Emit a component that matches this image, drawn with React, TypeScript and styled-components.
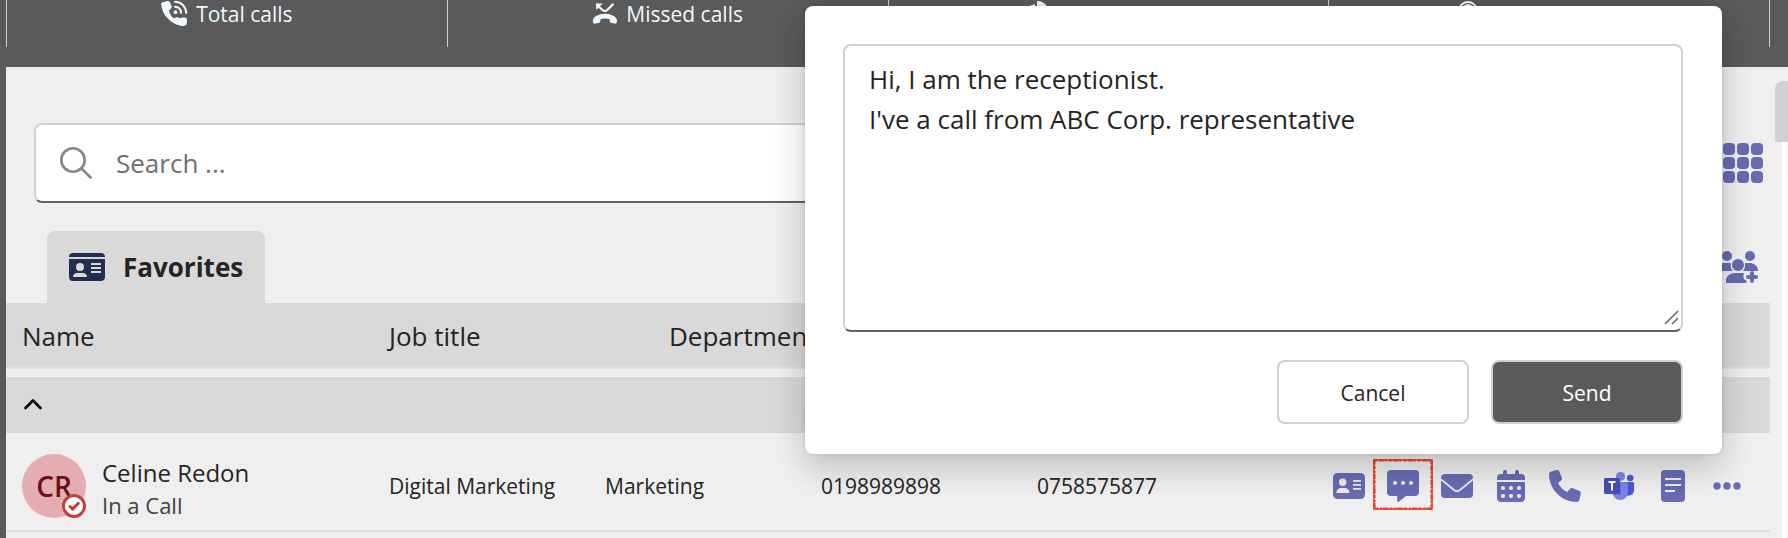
import React from "react";
import styled, { createGlobalStyle } from "styled-components";

const accent = "#676cb3";

const GlobalStyle = createGlobalStyle`
  *, *::before, *::after { box-sizing: border-box; }
  body {
    margin: 0;
    background: #efefef;
    color: #242424;
    font-family: "Open Sans", "Noto Sans", sans-serif;
    font-size: 21px;
  }
  button, input, textarea { font: inherit; color: inherit; margin: 0; }
  button { padding: 0; border: 0; background: none; cursor: pointer; }
  svg { display: block; flex: none; }
`;

const Page = styled.div`
  min-height: 100vh;
  display: flex;
  flex-direction: column;
  border-left: 6px solid #5a5a5a;
  overflow: hidden;
`;

const StatsBar = styled.header`
  display: flex;
  padding: 0 18px 20px 0;
  background: #5a5a5a;
`;

const Stat = styled.div`
  flex: 1;
  height: 47px;
  display: flex;
  justify-content: center;
  align-items: flex-start;
  gap: 8px;
  border-left: 1px solid #d1d1d1;
  color: #f0f8ff;
  font-size: 21px;
  line-height: 28px;
  &:last-child { border-right: 1px solid #d1d1d1; }
`;

const Main = styled.main`
  flex: 1;
  display: flex;
`;

const Content = styled.div`
  flex: 1;
  min-width: 0;
  padding: 56px 5px 0 0;
`;

const ScrollRail = styled.div`
  width: 13px;
  padding-top: 14px;
  display: flex;
  flex-direction: column;
  align-items: flex-end;
`;

const ScrollThumb = styled.div`
  width: 13px;
  height: 61px;
  border-radius: 8px 0 0 0;
  background: #d0d1d4;
`;

const ScrollTrack = styled.div`
  flex: 1;
  width: 6px;
  background: linear-gradient(to right, #ffffff 40%, #f2f2f2);
`;

const SearchRow = styled.div`
  display: flex;
  align-items: center;
  gap: 32px;
  padding: 0 7px 0 28px;
`;

const SearchBox = styled.label`
  flex: 1;
  height: 80px;
  display: flex;
  align-items: center;
  gap: 24px;
  padding: 0 24px;
  background: #ffffff;
  border: 2px solid #d1d1d1;
  border-bottom-color: #616161;
  border-radius: 8px;
`;

const SearchInput = styled.input`
  flex: 1;
  min-width: 0;
  border: 0;
  padding: 0;
  outline: 0;
  background: none;
  font-size: 26px;
  &::placeholder { color: #707070; opacity: 1; }
`;

const IconButton = styled.button`
  display: flex;
  align-items: center;
  justify-content: center;
  color: ${accent};
`;

const TabRow = styled.div`
  display: flex;
  justify-content: space-between;
  align-items: center;
  margin-top: 28px;
  padding: 0 12px 0 41px;
`;

const Tab = styled.button`
  height: 72px;
  display: flex;
  align-items: center;
  gap: 18px;
  padding: 0 22px;
  border-radius: 8px 8px 0 0;
  background: #d9d9d9;
  font-size: 26px;
  font-weight: 700;
`;

const ContactTable = styled.table`
  display: block;
  thead, tbody { display: block; }
  th, td { padding: 0; text-align: left; font-weight: 400; }
`;

const HeaderRow = styled.tr`
  display: grid;
  grid-template-columns: 367px 280px 1fr;
  align-items: center;
  height: 66px;
  margin-bottom: 8px;
  padding: 2px 16px 0;
  background: #d9d9d9;
  border-bottom: 2px solid #e0e0e0;
  font-size: 26px;
`;

const GroupRow = styled.tr`
  display: flex;
  align-items: center;
  height: 56px;
  padding: 0 16px;
  background: #d9d9d9;
`;

const ContactRow = styled.tr`
  display: grid;
  grid-template-columns: 367px 216px 216px 216px 1fr;
  align-items: center;
  height: 99px;
  padding: 8px 27px 0 16px;
  border-bottom: 2px solid #e0e0e0;
`;

const LastCell = styled.td`
  display: flex;
  align-items: center;
  justify-content: space-between;
`;

const Person = styled.div`
  display: flex;
  align-items: flex-end;
  gap: 16px;
`;

const Avatar = styled.div`
  position: relative;
  width: 64px;
  height: 64px;
  display: flex;
  align-items: center;
  justify-content: center;
  border-radius: 50%;
  background: #e4adb2;
  color: #6b1016;
  font-size: 28px;
  font-weight: 600;
`;

const Presence = styled.span`
  position: absolute;
  right: 0;
  bottom: 0;
`;

const PersonText = styled.div`
  height: 61px;
`;

const PersonName = styled.div`
  font-size: 24px;
  line-height: 32px;
`;

const PersonStatus = styled.div`
  color: #424242;
  font-size: 22px;
  line-height: 32px;
`;

const Actions = styled.div`
  display: flex;
  justify-content: flex-end;
  gap: 22px;
`;

const ActionButton = styled(IconButton)`
  position: relative;
  width: 32px;
  height: 32px;
`;

const Marker = styled.svg`
  position: absolute;
  left: -14px;
  top: -11px;
`;

const DialogLayer = styled.div`
  position: absolute;
  top: 6px;
  left: 0;
  right: 66px;
  display: flex;
  justify-content: flex-end;
  pointer-events: none;
`;

const Dialog = styled.form`
  width: 100%;
  max-width: 917px;
  padding: 38px 39px 30px 38px;
  border-radius: 8px;
  background: #ffffff;
  box-shadow: 0 0 4px rgba(0, 0, 0, 0.12), 0 16px 32px rgba(0, 0, 0, 0.14), 0 4px 40px rgba(0, 0, 0, 0.08);
  pointer-events: auto;
`;

const MessageField = styled.div`
  position: relative;
`;

const Message = styled.textarea`
  display: block;
  width: 100%;
  height: 288px;
  padding: 13px 24px;
  resize: none;
  outline: 0;
  border: 2px solid #d1d1d1;
  border-bottom-color: #616161;
  border-radius: 8px;
  background: #ffffff;
  font-size: 26px;
  line-height: 40px;
`;

const Grip = styled.svg`
  position: absolute;
  right: 4px;
  bottom: 7px;
`;

const DialogActions = styled.div`
  display: flex;
  justify-content: flex-end;
  gap: 22px;
  margin-top: 28px;
`;

const DialogButton = styled.button<{ $primary?: boolean }>`
  width: 192px;
  height: 64px;
  padding-top: 2px;
  border: 2px solid #d1d1d1;
  border-radius: 8px;
  background: ${(p) => (p.$primary ? "#5a5a5a" : "#ffffff")};
  color: ${(p) => (p.$primary ? "#ffffff" : "#242424")};
  font-size: 21px;
`;

const TotalCallsIcon = () => (
  <svg width="27" height="27" viewBox="0 0 27 27" fill="currentColor">
    <path d="M6 1.2c1.200-.4 2.600.2 3.100 1.400l1.400 3.100c.5 1 .2 2.200-.6 3L8 10.600c.3 2.600 2 5.600 4.600 7.600l3-.9c1.100-.3 2.200.1 2.900 1l0 0c2-.6 5.500-1.200 6.800-.2 1 .8.900 4.900.2 6.500-.6 1.300-3.800 1.600-5.600 1.200C9.500 23.900.8 14.500.2 4.600.1 3.200.6 2.500 1.800 2.200z" />
    <circle cx="14.500" cy="12.200" r="1.900" />
    <path d="M14 6.800c3.600.2 5.900 2.600 6.100 6.100M14 1.800c6.500.2 11 4.900 11.200 11.200" fill="none" stroke="currentColor" strokeWidth="2" strokeLinecap="round" />
  </svg>
);

const MissedCallsIcon = () => (
  <svg width="26" height="26" viewBox="0 0 26 26" fill="currentColor">
    <path d="M13 13.700c5.600 0 12.500 2.800 12 7.600-.1 1.600-.8 2.600-2.200 2.300l-3.300-.6c-1.100-.2-1.800-1-1.800-2.100l-.2-1.800c-2.900-.9-6-.9-8.900 0l-.3 1.800c-.1 1.100-.7 1.900-1.800 2.100l-3.300.6C1.700 23.900.9 22.900.8 21.300c-.3-4.800 6.600-7.600 12.200-7.600z" />
    <path d="M4.800 4.500l5.300 5.200c1.600 1.500 3.800 1.500 5.400 0l5.300-5.300" fill="none" stroke="currentColor" strokeWidth="2.200" strokeLinecap="round" />
    <path d="M4.200 3.500h6.500L4.200 10z" />
  </svg>
);

const DurationIcon = () => (
  <svg width="27" height="26" viewBox="0 0 27 26" fill="currentColor">
    <path d="M9 1c7 0 12 5 12 12H9zM1 6a10 10 0 0 0 17 12l-11-3V4z" />
  </svg>
);

const AnsweredIcon = () => (
  <svg width="27" height="26" viewBox="0 0 27 26">
    <circle cx="9" cy="11" r="9" fill="none" stroke="currentColor" strokeWidth="2" />
    <circle cx="9" cy="10" r="6" fill="currentColor" />
  </svg>
);

const SearchIcon = () => (
  <svg width="32" height="32" viewBox="0 0 32 32" fill="none" stroke="#858585" strokeWidth="2.600" strokeLinecap="round">
    <circle cx="13" cy="13" r="11.700" />
    <path d="M21.500 21.500l9 9" />
  </svg>
);

const AppsIcon = () => (
  <svg width="40" height="40" viewBox="0 0 40 40" fill="currentColor">
    {[0, 14, 28].map((y) =>
      [0, 14, 28].map((x) => <rect key={`${x}-${y}`} x={x} y={y} width="12" height="12" rx="4" />)
    )}
  </svg>
);

const AddPeopleIcon = () => (
  <svg width="40" height="32" viewBox="0 0 40 32" fill="currentColor">
    <circle cx="9" cy="5" r="5" />
    <circle cx="32" cy="5" r="5" />
    <circle cx="20" cy="14" r="6" />
    <path d="M0 20v-3c0-3 3-5 7-5h4.500c1 0 1.500.2 1.300 1-.5 3 .4 5 2 7zM40 20v-1c-1-5-4-7-9-7h-3c-1 0-1.200.3-1.100 1 .4 3-.4 5-1.900 7zM8 32v-2c0-5 4-8 9-8h7c1 0 2 .2 2.300.6C25.300 23.500 25.500 24.600 25.500 26c0 2 1 3 3 3.300V32z" />
    <path d="M34 22v8M30 26h8" stroke="currentColor" strokeWidth="4" strokeLinecap="round" />
  </svg>
);

const FavoritesIcon = () => (
  <svg width="36" height="28" viewBox="0 0 36 28">
    <path d="M0 4c0-2.500 1.500-4 4-4h28c2.500 0 4 1.500 4 4zM0 6h36v18c0 2.500-1.500 4-4 4H4c-2.500 0-4-1.500-4-4z" fill="#222f50" />
    <g fill="#d9d9d9">
      <circle cx="11" cy="14" r="4" />
      <path d="M4 24c0-2 1.500-4 4-4h6c2.500 0 4 2 4 4z" />
      <path d="M22 10h10v2H22zM22 14h10v2H22zM22 18h10v2H22z" />
    </g>
  </svg>
);

const ChevronIcon = () => (
  <svg width="22" height="20" viewBox="0 0 22 20" fill="none" stroke="#000000" strokeWidth="2.600" strokeLinecap="round" strokeLinejoin="round">
    <path d="M3.500 13L11 5.500l7.500 7.500" />
  </svg>
);

const PresenceIcon = () => (
  <svg width="24" height="24" viewBox="0 0 24 24">
    <circle cx="12" cy="12" r="10.500" fill="#ffffff" stroke="#c4403f" strokeWidth="3" />
    <path d="M8 12.500l2.700 2.600 5.500-5.700" fill="none" stroke="#c4403f" strokeWidth="3" strokeLinecap="round" strokeLinejoin="round" />
  </svg>
);

const CardIcon = () => (
  <svg width="32" height="32" viewBox="0 0 32 32">
    <rect y="3" width="32" height="26" rx="4.500" fill="currentColor" />
    <g fill="#ececec">
      <circle cx="9.700" cy="12.300" r="3.700" />
      <path d="M3.500 23c0-3 2-5 5-5h3c3 0 5 2 5 5zM20 10h8v1.800h-8zM20 14h8v1.800h-8zM20 18h8v1.800h-8z" />
    </g>
  </svg>
);

const ChatIcon = () => (
  <svg width="32" height="32" viewBox="0 0 32 32">
    <path d="M4 0h24c2.500 0 4 1.500 4 4v18c0 2.500-1.500 4-4 4h-9l-7.200 5.700c-.9.600-1.600.200-1.600-.7V26H4c-2.500 0-4-1.500-4-4V4c0-2.500 1.500-4 4-4z" fill="currentColor" />
    <g fill="#ececec"><circle cx="8" cy="13" r="2" /><circle cx="16" cy="13" r="2" /><circle cx="24" cy="13" r="2" /></g>
  </svg>
);

const MailIcon = () => (
  <svg width="32" height="32" viewBox="0 0 32 32">
    <rect y="4" width="32" height="24" rx="4" fill="currentColor" />
    <path d="M-.5 9l13.500 11c2 1.600 4 1.600 6 0L32.500 9" fill="none" stroke="#ececec" strokeWidth="1.800" />
  </svg>
);

const CalendarIcon = () => (
  <svg width="32" height="32" viewBox="0 0 32 32">
    <path d="M2 10V8c0-2.600 1.400-4 4-4h2V2c0-2.600 4-2.600 4 0v2h8V2c0-2.600 4-2.600 4 0v2h2c2.600 0 4 1.400 4 4v2zM2 12h28v16c0 2.500-1.500 4-4 4H6c-2.500 0-4-1.500-4-4z" fill="currentColor" />
    <g fill="#efefef">
      {[18, 26].map((y) => [8, 16, 24].map((x) => <circle key={`${x}-${y}`} cx={x} cy={y} r="2.100" />))}
    </g>
  </svg>
);

const PhoneIcon = () => (
  <svg width="32" height="32" viewBox="0 0 32 32" fill="currentColor">
    <path d="M2.400 1.500L7.600.1c1.200-.3 2.200.3 2.700 1.400l2.500 6c.4 1 .2 2-.6 2.800l-3.100 2.600c1.900 4 5.100 7.200 9.100 9.100l2.600-3.100c.7-.8 1.800-1.100 2.800-.6l6.700 2.500c1.100.5 1.800 1.500 1.500 2.700L30.400 30c-.3 1.200-1.300 2-2.500 2C12.500 32 0 19.500 0 4c0-1.200 1.200-2.200 2.400-2.500z" />
  </svg>
);

const TeamsIcon = () => (
  <svg width="32" height="32" viewBox="0 0 32 32">
    <circle cx="27.200" cy="8" r="3.300" fill="#5059c9" />
    <path d="M22 12h7.500c1 0 1.600.6 1.600 1.600V20c0 3-2.300 5.500-5.500 5.500H22z" fill="#5059c9" />
    <circle cx="17.500" cy="6.500" r="4.600" fill="#7b83eb" />
    <path d="M10 12h13.200c1 0 1.600.6 1.600 1.600V22c0 4.500-3.300 8-7.500 8S9.500 26.500 9.500 22z" fill="#7b83eb" />
    <path d="M10 12h8v13h-7.800z" fill="#5b62c8" opacity="0.600" />
    <rect x="1" y="8" width="16" height="16" rx="1.500" fill="#464eb8" />
    <path d="M5.500 12h7M9 12v8.500" stroke="#ffffff" strokeWidth="2" fill="none" />
  </svg>
);

const NoteIcon = () => (
  <svg width="32" height="32" viewBox="0 0 32 32">
    <rect x="4" width="24" height="32" rx="4" fill="currentColor" />
    <path d="M8 9h16M8 15h16M8 21h10" stroke="#ececec" strokeWidth="2" />
  </svg>
);

const MoreIcon = () => (
  <svg width="32" height="32" viewBox="0 0 32 32" fill="currentColor">
    <circle cx="6" cy="16" r="3.700" /><circle cx="16" cy="16" r="3.700" /><circle cx="26" cy="16" r="3.700" />
  </svg>
);

const stats = [
  { label: "Total calls", Icon: TotalCallsIcon },
  { label: "Missed calls", Icon: MissedCallsIcon },
  { label: "Call duration", Icon: DurationIcon },
  { label: "Answered calls", Icon: AnsweredIcon },
];

const actions = [
  { label: "Contact card", Icon: CardIcon },
  { label: "Chat", Icon: ChatIcon, marked: true },
  { label: "Email", Icon: MailIcon },
  { label: "Calendar", Icon: CalendarIcon },
  { label: "Call", Icon: PhoneIcon },
  { label: "Teams", Icon: TeamsIcon },
  { label: "Notes", Icon: NoteIcon },
  { label: "More", Icon: MoreIcon },
];

export default function App() {
  return (
    <>
      <GlobalStyle />
      <Page>
        <StatsBar>
          {stats.map(({ label, Icon }) => (
            <Stat key={label}>
              <Icon />
              {label}
            </Stat>
          ))}
        </StatsBar>
        <Main>
          <Content>
            <SearchRow>
              <SearchBox>
                <SearchIcon />
                <SearchInput type="text" placeholder="Search ..." aria-label="Search" />
              </SearchBox>
              <IconButton type="button" aria-label="Dial pad">
                <AppsIcon />
              </IconButton>
            </SearchRow>
            <TabRow>
              <Tab type="button">
                <FavoritesIcon />
                Favorites
              </Tab>
              <IconButton type="button" aria-label="Add group">
                <AddPeopleIcon />
              </IconButton>
            </TabRow>
            <ContactTable>
              <thead>
                <HeaderRow>
                  <th>Name</th>
                  <th>Job title</th>
                  <th>Department</th>
                </HeaderRow>
              </thead>
              <tbody>
                <GroupRow>
                  <td>
                    <IconButton type="button" aria-label="Collapse group">
                      <ChevronIcon />
                    </IconButton>
                  </td>
                </GroupRow>
                <ContactRow>
                  <td>
                    <Person>
                      <Avatar>
                        CR
                        <Presence>
                          <PresenceIcon />
                        </Presence>
                      </Avatar>
                      <PersonText>
                        <PersonName>Celine Redon</PersonName>
                        <PersonStatus>In a Call</PersonStatus>
                      </PersonText>
                    </Person>
                  </td>
                  <td>Digital Marketing</td>
                  <td>Marketing</td>
                  <td>0198989898</td>
                  <LastCell>
                    <span>0758575877</span>
                    <Actions>
                      {actions.map(({ label, Icon, marked }) => (
                        <ActionButton key={label} type="button" aria-label={label}>
                          <Icon />
                          {marked && (
                            <Marker width="60" height="51" viewBox="0 0 60 51" fill="none" stroke="#ec432b">
                              <rect x="1" y="1" width="58" height="49" strokeWidth="1.600" />
                              <rect x="1.300" y="1.300" width="57.400" height="48.400" strokeWidth="2.600" strokeDasharray="3 1.500 5 1 2 2" />
                            </Marker>
                          )}
                        </ActionButton>
                      ))}
                    </Actions>
                  </LastCell>
                </ContactRow>
              </tbody>
            </ContactTable>
          </Content>
          <ScrollRail>
            <ScrollThumb />
            <ScrollTrack />
          </ScrollRail>
        </Main>
      </Page>
      <DialogLayer>
        <Dialog role="dialog" aria-label="Send message">
          <MessageField>
            <Message
              aria-label="Message"
              defaultValue={"Hi, I am the receptionist.\nI've a call from ABC Corp. representative"}
            />
            <Grip width="15" height="15" viewBox="0 0 15 15" fill="none" stroke="#616161" strokeWidth="1.500">
              <path d="M1 14L14 1M8 14l6-6" />
            </Grip>
          </MessageField>
          <DialogActions>
            <DialogButton type="button">Cancel</DialogButton>
            <DialogButton type="button" $primary>
              Send
            </DialogButton>
          </DialogActions>
        </Dialog>
      </DialogLayer>
    </>
  );
}
